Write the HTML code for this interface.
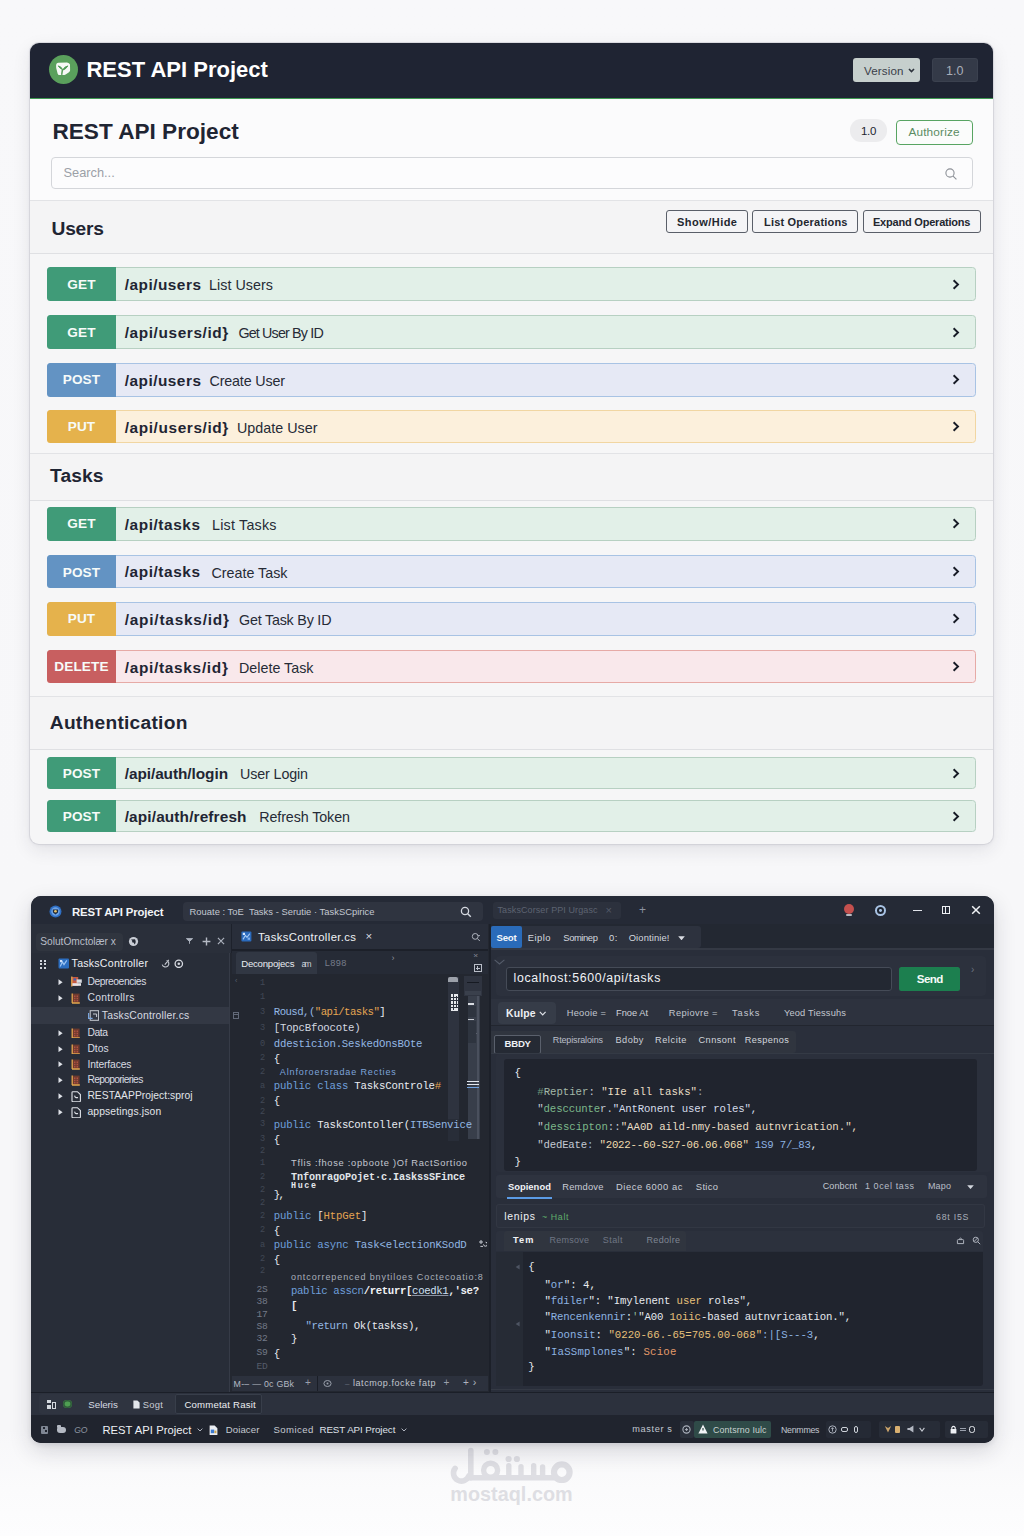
<!DOCTYPE html>
<html lang="en"><head><meta charset="utf-8"><title>REST API Project</title>
<style>
*{margin:0;padding:0;box-sizing:border-box}
html,body{width:1024px;height:1536px;overflow:hidden}
body{position:relative;background:linear-gradient(180deg,#f8f8fa 0%,#f7f7f9 58%,#f7f7f9 93%,#fbfbfc 97%,#fdfdfe 100%);font-family:"Liberation Sans",sans-serif}
div,span,svg{position:absolute}
span{white-space:pre}
.s{font-family:"Liberation Sans",sans-serif}
.m{font-family:"Liberation Mono",monospace}
b{font-weight:700}
</style></head><body>

<div style="left:30.4px;top:43.2px;width:963px;height:800.9px;border-radius:9px;background:#f6f6f7;box-shadow:0 0 0 1px rgba(200,200,208,.55),0 6px 18px rgba(40,40,60,.10),0 1px 4px rgba(40,40,60,.06);overflow:hidden">
<div style="left:-0.3999999999999986px;top:-0.20000000000000284px;width:964px;height:55.2px;background:#1f2433;"></div>
<div style="left:-0.3999999999999986px;top:54.7px;width:964px;height:1.3px;background:#3f9a52;"></div>
<div style="left:18.5px;top:11.599999999999994px;width:29.3px;height:29.3px;background:#5aa05c;border-radius:50%"></div>
<svg style="left:23.6px;top:16.799999999999997px" width="18" height="17" viewBox="54 60 18 17"><path d="M56.1 65.8 Q56.1 63 58.4 62.8 L67 62.4 Q69.4 62.6 70 64.6 L70.1 70.2 Q70 71.4 69 72.2 L65.6 74.6 Q65.2 74.9 64.4 74.9 L58.8 74.9 Q57.9 74.9 57.6 73.6 L56.2 68 Z" fill="#f7f9f6"/><path d="M58.2 65.9 Q61 66.2 62.5 69.4 Q60 68.9 58.2 65.9 Z M67.9 65.9 Q64.4 66.4 62.6 70.2 Q66 69.2 67.9 65.9 Z" fill="#4f9a56" stroke="#4f9a56" stroke-width=".9" stroke-linejoin="round"/><path d="M62.5 69.2 L61.7 74.9" fill="none" stroke="#5aa05c" stroke-width="1.5"/></svg>
<span class="s" style="left:56.1px;top:11.20px;line-height:31px;font-size:22px;color:#ffffff;font-weight:700;">REST API Project</span>
<div style="left:822.6px;top:15.299999999999997px;width:67px;height:23.5px;background:#c6cfcd;border-radius:3px"></div>
<span class="s" style="left:833.6px;top:19.40px;line-height:16px;font-size:11.6px;color:#3a4049;letter-spacing:0.151px;">Version</span>
<svg style="left:877.6px;top:25.299999999999997px" width="7" height="5" viewBox="0 0 7 5"><path d="M1 1 L3.5 3.6 L6 1" fill="none" stroke="#2d333c" stroke-width="1.6"/></svg>
<div style="left:901.6px;top:15.299999999999997px;width:46px;height:23.5px;background:#343a48;border-radius:3px;box-shadow:inset 0 0 0 1px rgba(255,255,255,.04)"></div>
<span class="s" style="left:915.6px;top:18.60px;line-height:18px;font-size:12.5px;color:#a9aeb8;">1.0</span>
<div style="left:-0.3999999999999986px;top:56.0px;width:964px;height:101.2px;background:#fbfbfc;"></div>
<span class="s" style="left:22.1px;top:72.60px;line-height:32px;font-size:22.6px;color:#1f2533;font-weight:700;">REST API Project</span>
<div style="left:819.6px;top:76.3px;width:37px;height:22.5px;background:#ececee;border-radius:11px"></div>
<span class="s" style="left:830.6px;top:79.60px;line-height:16px;font-size:11.5px;color:#22262e;letter-spacing:-.3px">1.0</span>
<div style="left:866.1px;top:76.8px;width:77px;height:25px;background:#fbfcfb;border:1.2px solid #58a462;border-radius:4px"></div>
<span class="s" style="left:878.0px;top:81.00px;line-height:17px;font-size:11.8px;color:#5b8c63;letter-spacing:0.169px;">Authorize</span>
<div style="left:21.1px;top:114.3px;width:922px;height:31.6px;background:#fcfcfd;border:1px solid #d4d6da;border-radius:4px"></div>
<span class="s" style="left:33.1px;top:120.90px;line-height:18px;font-size:12.8px;color:#9ba0a7;">Search...</span>
<svg style="left:913.6px;top:123.8px" width="14" height="14" viewBox="0 0 14 14"><circle cx="6" cy="6" r="4.1" fill="none" stroke="#8c9097" stroke-width="1.1"/><path d="M9.1 9.1 L12.4 12.4" stroke="#8c9097" stroke-width="1.1"/></svg>
<div style="left:-0.3999999999999986px;top:157.2px;width:964px;height:53.599999999999994px;background:#f4f4f5;"></div>
<div style="left:-0.3999999999999986px;top:156.7px;width:964px;height:1px;background:#e2e3e6;"></div>
<div style="left:-0.3999999999999986px;top:210.3px;width:964px;height:1px;background:#dfe0e3;"></div>
<span class="s" style="left:21.200000000000003px;top:172.20px;line-height:27px;font-size:19.2px;color:#1f2533;font-weight:700;letter-spacing:-0.243px;">Users</span>
<div style="left:-0.3999999999999986px;top:410.5px;width:964px;height:46.60000000000002px;background:#f4f4f5;"></div>
<div style="left:-0.3999999999999986px;top:410.0px;width:964px;height:1px;background:#e2e3e6;"></div>
<div style="left:-0.3999999999999986px;top:456.6px;width:964px;height:1px;background:#dfe0e3;"></div>
<span class="s" style="left:19.6px;top:419.30px;line-height:27px;font-size:19.2px;color:#1f2533;font-weight:700;letter-spacing:0.121px;">Tasks</span>
<div style="left:-0.3999999999999986px;top:653.0999999999999px;width:964px;height:53.0px;background:#f4f4f5;"></div>
<div style="left:-0.3999999999999986px;top:652.5999999999999px;width:964px;height:1px;background:#e2e3e6;"></div>
<div style="left:-0.3999999999999986px;top:705.5999999999999px;width:964px;height:1px;background:#dfe0e3;"></div>
<span class="s" style="left:19.4px;top:665.80px;line-height:27px;font-size:19.2px;color:#1f2533;font-weight:700;letter-spacing:0.254px;">Authentication</span>
<div style="left:635.6px;top:167.10000000000002px;width:82px;height:22.8px;background:#f4f4f6;border:1px solid #5a5f69;border-radius:3px"></div>
<span class="s" style="left:646.6px;top:171.90px;line-height:15px;font-size:11px;color:#23272f;font-weight:700;letter-spacing:0.472px;">Show/Hide</span>
<div style="left:722.1px;top:167.10000000000002px;width:106px;height:22.8px;background:#f4f4f6;border:1px solid #5a5f69;border-radius:3px"></div>
<span class="s" style="left:733.6px;top:171.90px;line-height:15px;font-size:11px;color:#23272f;font-weight:700;letter-spacing:0.201px;">List Operations</span>
<div style="left:832.6px;top:167.10000000000002px;width:118px;height:22.8px;background:#f4f4f6;border:1px solid #5a5f69;border-radius:3px"></div>
<span class="s" style="left:842.6px;top:171.90px;line-height:15px;font-size:11px;color:#23272f;font-weight:700;letter-spacing:-0.210px;">Expand Operations</span>
<div style="left:16.6px;top:224.0px;width:929.3px;height:34.2px;background:#e2f0e8;border:1px solid #b7d0c2;border-radius:3.5px"></div>
<div style="left:16.6px;top:224.0px;width:69px;height:34.2px;background:#409b78;border-radius:3.5px 0 0 3.5px"></div>
<span class="s" style="left:16.6px;top:224.0px;width:69px;text-align:center;line-height:35.800000000000004px;font-size:13.6px;font-weight:700;color:#f7fbf9;letter-spacing:.1px">GET</span>
<span class="s" style="left:94.30000000000001px;top:230.90px;line-height:22px;font-size:15.4px;color:#1f2533;font-weight:700;letter-spacing:0.489px;">/api/users</span>
<span class="s" style="left:178.6px;top:232.10px;line-height:20px;font-size:14.3px;color:#262b36;letter-spacing:0.048px;">List Users</span>
<svg style="left:922.1px;top:235.60000000000002px" width="8" height="11" viewBox="0 0 8 11"><path d="M1.6 1.3 L6 5.5 L1.6 9.7" fill="none" stroke="#171b26" stroke-width="1.9"/></svg>
<div style="left:16.6px;top:271.90000000000003px;width:929.3px;height:34.4px;background:#e2f0e8;border:1px solid #b7d0c2;border-radius:3.5px"></div>
<div style="left:16.6px;top:271.90000000000003px;width:69px;height:34.4px;background:#409b78;border-radius:3.5px 0 0 3.5px"></div>
<span class="s" style="left:16.6px;top:271.90000000000003px;width:69px;text-align:center;line-height:36.0px;font-size:13.6px;font-weight:700;color:#f7fbf9;letter-spacing:.1px">GET</span>
<span class="s" style="left:94.30000000000001px;top:278.90px;line-height:22px;font-size:15.4px;color:#1f2533;font-weight:700;letter-spacing:0.603px;">/api/users/id}</span>
<span class="s" style="left:208.0px;top:280.10px;line-height:20px;font-size:14.3px;color:#262b36;letter-spacing:-0.827px;">Get User By ID</span>
<svg style="left:922.1px;top:283.6px" width="8" height="11" viewBox="0 0 8 11"><path d="M1.6 1.3 L6 5.5 L1.6 9.7" fill="none" stroke="#171b26" stroke-width="1.9"/></svg>
<div style="left:16.6px;top:320.2px;width:929.3px;height:33.2px;background:#e6e9f5;border:1px solid #a8c3e4;border-radius:3.5px"></div>
<div style="left:16.6px;top:320.2px;width:69px;height:33.2px;background:#6393c3;border-radius:3.5px 0 0 3.5px"></div>
<span class="s" style="left:16.6px;top:320.2px;width:69px;text-align:center;line-height:34.800000000000004px;font-size:13.6px;font-weight:700;color:#f7fbf9;letter-spacing:.1px">POST</span>
<span class="s" style="left:94.30000000000001px;top:326.60px;line-height:22px;font-size:15.4px;color:#1f2533;font-weight:700;letter-spacing:0.489px;">/api/users</span>
<span class="s" style="left:179.1px;top:327.80px;line-height:20px;font-size:14.3px;color:#262b36;letter-spacing:-0.159px;">Create User</span>
<svg style="left:922.1px;top:331.3px" width="8" height="11" viewBox="0 0 8 11"><path d="M1.6 1.3 L6 5.5 L1.6 9.7" fill="none" stroke="#171b26" stroke-width="1.9"/></svg>
<div style="left:16.6px;top:367.1px;width:929.3px;height:33.1px;background:#fcf0dc;border:1px solid #f1d6a2;border-radius:3.5px"></div>
<div style="left:16.6px;top:367.1px;width:69px;height:33.1px;background:#e5b24c;border-radius:3.5px 0 0 3.5px"></div>
<span class="s" style="left:16.6px;top:367.1px;width:69px;text-align:center;line-height:34.7px;font-size:13.6px;font-weight:700;color:#f7fbf9;letter-spacing:.1px">PUT</span>
<span class="s" style="left:94.30000000000001px;top:373.45px;line-height:22px;font-size:15.4px;color:#1f2533;font-weight:700;letter-spacing:0.603px;">/api/users/id}</span>
<span class="s" style="left:206.6px;top:374.65px;line-height:20px;font-size:14.3px;color:#262b36;letter-spacing:0.022px;">Update User</span>
<svg style="left:922.1px;top:378.15000000000003px" width="8" height="11" viewBox="0 0 8 11"><path d="M1.6 1.3 L6 5.5 L1.6 9.7" fill="none" stroke="#171b26" stroke-width="1.9"/></svg>
<div style="left:16.6px;top:464.2px;width:929.3px;height:33.2px;background:#e2f0e8;border:1px solid #b7d0c2;border-radius:3.5px"></div>
<div style="left:16.6px;top:464.2px;width:69px;height:33.2px;background:#409b78;border-radius:3.5px 0 0 3.5px"></div>
<span class="s" style="left:16.6px;top:464.2px;width:69px;text-align:center;line-height:34.800000000000004px;font-size:13.6px;font-weight:700;color:#f7fbf9;letter-spacing:.1px">GET</span>
<span class="s" style="left:94.30000000000001px;top:470.60px;line-height:22px;font-size:15.4px;color:#1f2533;font-weight:700;letter-spacing:0.567px;">/api/tasks</span>
<span class="s" style="left:181.6px;top:471.80px;line-height:20px;font-size:14.3px;color:#262b36;letter-spacing:0.220px;">List Tasks</span>
<svg style="left:922.1px;top:475.3px" width="8" height="11" viewBox="0 0 8 11"><path d="M1.6 1.3 L6 5.5 L1.6 9.7" fill="none" stroke="#171b26" stroke-width="1.9"/></svg>
<div style="left:16.6px;top:511.7px;width:929.3px;height:33.6px;background:#e6e9f5;border:1px solid #a8c3e4;border-radius:3.5px"></div>
<div style="left:16.6px;top:511.7px;width:69px;height:33.6px;background:#6393c3;border-radius:3.5px 0 0 3.5px"></div>
<span class="s" style="left:16.6px;top:511.7px;width:69px;text-align:center;line-height:35.2px;font-size:13.6px;font-weight:700;color:#f7fbf9;letter-spacing:.1px">POST</span>
<span class="s" style="left:94.30000000000001px;top:518.30px;line-height:22px;font-size:15.4px;color:#1f2533;font-weight:700;letter-spacing:0.567px;">/api/tasks</span>
<span class="s" style="left:181.1px;top:519.50px;line-height:20px;font-size:14.3px;color:#262b36;letter-spacing:-0.004px;">Create Task</span>
<svg style="left:922.1px;top:522.9999999999999px" width="8" height="11" viewBox="0 0 8 11"><path d="M1.6 1.3 L6 5.5 L1.6 9.7" fill="none" stroke="#171b26" stroke-width="1.9"/></svg>
<div style="left:16.6px;top:559.1999999999999px;width:929.3px;height:33.2px;background:#e6e9f5;border:1px solid #a8c3e4;border-radius:3.5px"></div>
<div style="left:16.6px;top:559.1999999999999px;width:69px;height:33.2px;background:#e5b24c;border-radius:3.5px 0 0 3.5px"></div>
<span class="s" style="left:16.6px;top:559.1999999999999px;width:69px;text-align:center;line-height:34.800000000000004px;font-size:13.6px;font-weight:700;color:#f7fbf9;letter-spacing:.1px">PUT</span>
<span class="s" style="left:94.30000000000001px;top:565.60px;line-height:22px;font-size:15.4px;color:#1f2533;font-weight:700;letter-spacing:0.781px;">/api/tasks/id}</span>
<span class="s" style="left:208.6px;top:566.80px;line-height:20px;font-size:14.3px;color:#262b36;letter-spacing:-0.200px;">Get Task By ID</span>
<svg style="left:922.1px;top:570.3px" width="8" height="11" viewBox="0 0 8 11"><path d="M1.6 1.3 L6 5.5 L1.6 9.7" fill="none" stroke="#171b26" stroke-width="1.9"/></svg>
<div style="left:16.6px;top:607.0px;width:929.3px;height:33.3px;background:#f9e8eb;border:1px solid #e6aaa6;border-radius:3.5px"></div>
<div style="left:16.6px;top:607.0px;width:69px;height:33.3px;background:#c85f60;border-radius:3.5px 0 0 3.5px"></div>
<span class="s" style="left:16.6px;top:607.0px;width:69px;text-align:center;line-height:34.9px;font-size:13.6px;font-weight:700;color:#f7fbf9;letter-spacing:.1px">DELETE</span>
<span class="s" style="left:94.30000000000001px;top:613.45px;line-height:22px;font-size:15.4px;color:#1f2533;font-weight:700;letter-spacing:0.704px;">/api/tasks/id}</span>
<span class="s" style="left:208.6px;top:614.65px;line-height:20px;font-size:14.3px;color:#262b36;letter-spacing:0.005px;">Delete Task</span>
<svg style="left:922.1px;top:618.15px" width="8" height="11" viewBox="0 0 8 11"><path d="M1.6 1.3 L6 5.5 L1.6 9.7" fill="none" stroke="#171b26" stroke-width="1.9"/></svg>
<div style="left:16.6px;top:714.0px;width:929.3px;height:32.2px;background:#e2f0e8;border:1px solid #b7d0c2;border-radius:3.5px"></div>
<div style="left:16.6px;top:714.0px;width:69px;height:32.2px;background:#409b78;border-radius:3.5px 0 0 3.5px"></div>
<span class="s" style="left:16.6px;top:714.0px;width:69px;text-align:center;line-height:33.800000000000004px;font-size:13.6px;font-weight:700;color:#f7fbf9;letter-spacing:.1px">POST</span>
<span class="s" style="left:94.30000000000001px;top:719.90px;line-height:22px;font-size:15.4px;color:#1f2533;font-weight:700;letter-spacing:-0.069px;">/api/auth/login</span>
<span class="s" style="left:209.6px;top:721.10px;line-height:20px;font-size:14.3px;color:#262b36;letter-spacing:-0.117px;">User Login</span>
<svg style="left:922.1px;top:724.6px" width="8" height="11" viewBox="0 0 8 11"><path d="M1.6 1.3 L6 5.5 L1.6 9.7" fill="none" stroke="#171b26" stroke-width="1.9"/></svg>
<div style="left:16.6px;top:757.1999999999999px;width:929.3px;height:31.4px;background:#e2f0e8;border:1px solid #b7d0c2;border-radius:3.5px"></div>
<div style="left:16.6px;top:757.1999999999999px;width:69px;height:31.4px;background:#409b78;border-radius:3.5px 0 0 3.5px"></div>
<span class="s" style="left:16.6px;top:757.1999999999999px;width:69px;text-align:center;line-height:33.0px;font-size:13.6px;font-weight:700;color:#f7fbf9;letter-spacing:.1px">POST</span>
<span class="s" style="left:94.30000000000001px;top:762.70px;line-height:22px;font-size:15.4px;color:#1f2533;font-weight:700;letter-spacing:0.131px;">/api/auth/refresh</span>
<span class="s" style="left:228.9px;top:763.90px;line-height:20px;font-size:14.3px;color:#262b36;letter-spacing:-0.104px;">Refresh Token</span>
<svg style="left:922.1px;top:767.4px" width="8" height="11" viewBox="0 0 8 11"><path d="M1.6 1.3 L6 5.5 L1.6 9.7" fill="none" stroke="#171b26" stroke-width="1.9"/></svg>
</div>
<svg style="left:440px;top:1440px" width="150" height="50" viewBox="440 1440 150 50" fill="none" stroke="#dedee3" stroke-linecap="round" stroke-linejoin="round"><path d="M455.17 1468.34 A7.9 7.9 0 1 0 468.82 1475.90" stroke-width="5.6"/><path d="M470.8 1450.6 V1477.6" stroke-width="5.6"/><path d="M470.8 1477.8 H556" stroke-width="5.6"/><circle cx="490.6" cy="1470.2" r="7" stroke-width="5.4"/><path d="M508.8 1465.6 V1477 M521 1466.6 V1477 M533.7 1465.6 V1477 M542.6 1467 V1477" stroke-width="5.4"/><circle cx="561.8" cy="1472.2" r="7.8" stroke-width="6.2"/><g fill="#dedee3" stroke="none"><circle cx="486.9" cy="1452" r="3"/><circle cx="495.4" cy="1452" r="3"/><circle cx="508.6" cy="1459" r="3.1"/><circle cx="516.9" cy="1459" r="3.1"/></g></svg>
<span class="s" style="left:450.3px;top:1480.30px;line-height:28px;font-size:19.8px;color:#dedee3;font-weight:700;letter-spacing:0.037px;">mostaql.com</span>
<div style="left:30.5px;top:896.2px;width:963.2px;height:546.9px;border-radius:10px;background:#22272f;box-shadow:0 8px 22px rgba(30,30,50,.16),0 2px 5px rgba(30,30,50,.10);overflow:hidden">
<div style="left:-0.5px;top:-0.2px;width:964px;height:28.5px;background:#252a36;"></div>
<div style="left:-0.5px;top:28.3px;width:200.5px;height:468px;background:#2a2f3a;"></div>
<div style="left:200.0px;top:28.3px;width:1.2px;height:29px;background:#1d212b;"></div>
<div style="left:201.0px;top:28.3px;width:257px;height:468px;background:#232730;"></div>
<div style="left:458.0px;top:28.3px;width:2.2px;height:468px;background:#1c2029;"></div>
<div style="left:460.2px;top:28.3px;width:503px;height:468px;background:#2a2f3b;"></div>
<div style="left:-0.5px;top:496.3px;width:964px;height:50px;background:#2c313d;"></div>
<svg style="left:18.5px;top:8.8px" width="13" height="13" viewBox="0 0 13 13"><circle cx="6.5" cy="6.5" r="6" fill="#2f6fc4"/><circle cx="6.5" cy="6.5" r="4.2" fill="#6ea3e6"/><path d="M3.8 4.6 L9.2 4.6 L9 7.4 L6.5 9.6 L4 7.4 Z" fill="#1d2a3f"/><circle cx="6.5" cy="6.3" r="1.3" fill="#e9c46a"/></svg>
<span class="s" style="left:41.5px;top:7.40px;line-height:16px;font-size:11.4px;color:#f2f4f7;font-weight:700;letter-spacing:-0.164px;">REST API Project</span>
<div style="left:152.0px;top:5.8px;width:300.5px;height:19.5px;background:#2f3440;border-radius:4px"></div>
<span class="s" style="left:159.0px;top:9.20px;line-height:13px;font-size:9.4px;color:#c3c8d1;letter-spacing:0.025px;">Rouate : ToE  Tasks - Serutie · TaskSCpirice</span>
<svg style="left:429.5px;top:9.8px" width="12" height="12" viewBox="0 0 12 12"><circle cx="5" cy="5" r="3.6" fill="none" stroke="#d5d9e0" stroke-width="1.3"/><path d="M7.7 7.7 L10.8 10.8" stroke="#d5d9e0" stroke-width="1.4"/></svg>
<div style="left:462.0px;top:5.6px;width:128.5px;height:17.6px;background:#2c313d;border-radius:3px"></div>
<span class="s" style="left:467.0px;top:8.00px;line-height:13px;font-size:9px;color:#5c6371;letter-spacing:0.094px;">TasksCorser PPI Urgasc</span>
<span class="s" style="left:575.0px;top:6.70px;line-height:15px;font-size:11px;color:#535a68;">×</span>
<span class="s" style="left:608.5px;top:5.50px;line-height:17px;font-size:12px;color:#8b92a0;">+</span>
<div style="left:813.7px;top:8.1px;width:10px;height:10px;background:#c4504e;border-radius:50%"></div>
<div style="left:815.7px;top:17.4px;width:6px;height:2.2px;background:#d9dde3;border-radius:1px;opacity:.8"></div>
<div style="left:844.1px;top:8.4px;width:11.6px;height:11.6px;background:#1d2430;border-radius:50%;border:2.6px solid #a9c3e4"></div>
<div style="left:848.5px;top:12.8px;width:2.8px;height:2.8px;background:#a9c3e4;border-radius:50%"></div>
<div style="left:882.5px;top:13.6px;width:9px;height:1.4px;background:#e1e4ea;"></div>
<div style="left:911.0px;top:9.4px;width:8.8px;height:8.8px;border:1.6px solid #eceef2"></div>
<div style="left:914.7px;top:10.8px;width:1.3px;height:6px;background:#eceef2;"></div>
<svg style="left:940.5px;top:9.3px" width="10" height="10" viewBox="0 0 10 10"><path d="M1.2 1.2 L8.8 8.8 M8.8 1.2 L1.2 8.8" stroke="#f0f2f5" stroke-width="1.5"/></svg>
<div style="left:5.2px;top:36.5px;width:87.3px;height:18px;background:#30353f;border-radius:4px"></div>
<span class="s" style="left:9.8px;top:38.40px;line-height:14px;font-size:10.2px;color:#b9bec8;letter-spacing:-0.018px;">SolutOmctolær x</span>
<svg style="left:97.5px;top:39.8px" width="11" height="11" viewBox="0 0 11 11"><circle cx="5.5" cy="5.5" r="4.6" fill="#c9cdd5"/><path d="M3 3.4 Q5 4.6 4 6.4 Q6 6 6.6 8.4 Q8.6 6 7 3.2 Z" fill="#232833"/></svg>
<svg style="left:155.5px;top:41.8px" width="7" height="6" viewBox="0 0 7 6"><path d="M0.4 0.6 L6.6 0.6 L3.5 3.4 Z M3.5 2.6 L3.5 5.8" fill="#aeb4bf" stroke="#aeb4bf" stroke-width=".9"/></svg>
<svg style="left:171.0px;top:40.8px" width="9" height="9" viewBox="0 0 9 9"><path d="M4.5 .6 V8.4 M.6 4.5 H8.4" stroke="#b5bac4" stroke-width="1.4"/></svg>
<svg style="left:186.3px;top:41.1px" width="8" height="8" viewBox="0 0 8 8"><path d="M.9 .9 L7.1 7.1 M7.1 .9 L.9 7.1" stroke="#aab0bb" stroke-width="1.2"/></svg>
<div style="left:-0.5px;top:57.3px;width:198.5px;height:439px;background:#282d38;"></div>
<div style="left:198.0px;top:57.3px;width:1px;height:439px;background:#363b47;"></div>
<div style="left:9.7px;top:64.0px;width:2px;height:2px;background:#d3d7de;"></div>
<div style="left:9.7px;top:67.2px;width:2px;height:2px;background:#d3d7de;"></div>
<div style="left:9.7px;top:70.4px;width:2px;height:2px;background:#d3d7de;"></div>
<div style="left:13.1px;top:64.0px;width:2px;height:2px;background:#d3d7de;"></div>
<div style="left:13.1px;top:67.2px;width:2px;height:2px;background:#d3d7de;"></div>
<div style="left:13.1px;top:70.4px;width:2px;height:2px;background:#d3d7de;"></div>
<svg style="left:27.0px;top:62.1px" width="11.5" height="11" viewBox="0 0 11.5 11"><rect x=".5" y=".5" width="10.5" height="10" rx="1" fill="#2c6ec0"/><path d="M2.2 8.6 L4.4 4 L6 6.6 L8.8 2.4" stroke="#9cc4f2" stroke-width="1.2" fill="none"/><rect x="2" y="2" width="2.2" height="2.2" fill="#cfe2fa"/></svg>
<span class="s" style="left:41.1px;top:60.00px;line-height:15px;font-size:10.6px;color:#eef0f4;letter-spacing:0.240px;">TasksController</span>
<svg style="left:130.0px;top:62.6px" width="9" height="9" viewBox="0 0 9 9"><path d="M1.2 5.6 A3.4 3.4 0 1 0 5.6 1.4 M7.8 .8 L3.8 5.6" stroke="#c5c9d1" stroke-width="1.1" fill="none"/></svg>
<svg style="left:143.7px;top:62.4px" width="9.6" height="9.6" viewBox="0 0 9.6 9.6"><circle cx="4.8" cy="4.8" r="3.7" fill="none" stroke="#d6d9e0" stroke-width="1.3"/><circle cx="4.8" cy="4.8" r="1.3" fill="#d6d9e0"/></svg>
<div style="left:-0.5px;top:110.8px;width:198.5px;height:17px;background:#333844;"></div>
<svg style="left:27.9px;top:82.6px" width="5" height="6.4" viewBox="0 0 5 6.4"><path d="M.5 .3 L4.6 3.2 L.5 6.1 Z" fill="#dfe2e8"/></svg>
<svg style="left:40.0px;top:80.3px" width="11.5" height="11" viewBox="0 0 11.5 11"><rect x=".6" y="1" width="6.6" height="9" fill="#c65a42"/><path d="M.8 .6 V10.4" stroke="#e4a84f" stroke-width="1.3"/><rect x="5.6" y="3.4" width="5.2" height="3.4" fill="#d9dbe0"/><rect x="1.4" y="7.2" width="8.6" height="2.6" fill="#e6e7ea"/><rect x="2.6" y="2.4" width="2.4" height="2" fill="#3d63b8"/></svg>
<span class="s" style="left:56.9px;top:78.80px;line-height:14px;font-size:10.3px;color:#d9dce3;letter-spacing:-0.423px;">Depreoencies</span>
<svg style="left:27.9px;top:99.1px" width="5" height="6.4" viewBox="0 0 5 6.4"><path d="M.5 .3 L4.6 3.2 L.5 6.1 Z" fill="#dfe2e8"/></svg>
<svg style="left:40.5px;top:97.1px" width="9.5" height="10.5" viewBox="0 0 9.5 10.5"><rect x="1" y=".6" width="7.6" height="9.4" fill="#6e3a2e"/><path d="M1.2 .5 V10 M1 10 H8.8" stroke="#e3a64e" stroke-width="1.3"/><path d="M3.8 2.6 V8.4 M6.2 2.6 V8.4" stroke="#c45a48" stroke-width="1.1" stroke-dasharray="1.4 .8"/></svg>
<span class="s" style="left:56.9px;top:95.30px;line-height:14px;font-size:10.3px;color:#d9dce3;letter-spacing:0.314px;">Controllrs</span>
<svg style="left:27.9px;top:133.5px" width="5" height="6.4" viewBox="0 0 5 6.4"><path d="M.5 .3 L4.6 3.2 L.5 6.1 Z" fill="#dfe2e8"/></svg>
<svg style="left:40.5px;top:131.5px" width="9.5" height="10.5" viewBox="0 0 9.5 10.5"><rect x="1" y=".6" width="7.6" height="9.4" fill="#6e3a2e"/><path d="M1.2 .5 V10 M1 10 H8.8" stroke="#e3a64e" stroke-width="1.3"/><path d="M3.8 2.6 V8.4 M6.2 2.6 V8.4" stroke="#c45a48" stroke-width="1.1" stroke-dasharray="1.4 .8"/></svg>
<span class="s" style="left:56.9px;top:129.70px;line-height:14px;font-size:10.3px;color:#d9dce3;letter-spacing:-0.386px;">Data</span>
<svg style="left:27.9px;top:149.7px" width="5" height="6.4" viewBox="0 0 5 6.4"><path d="M.5 .3 L4.6 3.2 L.5 6.1 Z" fill="#dfe2e8"/></svg>
<svg style="left:40.5px;top:147.7px" width="9.5" height="10.5" viewBox="0 0 9.5 10.5"><rect x="1" y=".6" width="7.6" height="9.4" fill="#6e3a2e"/><path d="M1.2 .5 V10 M1 10 H8.8" stroke="#e3a64e" stroke-width="1.3"/><path d="M3.8 2.6 V8.4 M6.2 2.6 V8.4" stroke="#c45a48" stroke-width="1.1" stroke-dasharray="1.4 .8"/></svg>
<span class="s" style="left:56.9px;top:145.90px;line-height:14px;font-size:10.3px;color:#d9dce3;letter-spacing:0.007px;">Dtos</span>
<svg style="left:27.9px;top:165.3px" width="5" height="6.4" viewBox="0 0 5 6.4"><path d="M.5 .3 L4.6 3.2 L.5 6.1 Z" fill="#dfe2e8"/></svg>
<svg style="left:40.5px;top:163.3px" width="9.5" height="10.5" viewBox="0 0 9.5 10.5"><rect x="1" y=".6" width="7.6" height="9.4" fill="#6e3a2e"/><path d="M1.2 .5 V10 M1 10 H8.8" stroke="#e3a64e" stroke-width="1.3"/><path d="M3.8 2.6 V8.4 M6.2 2.6 V8.4" stroke="#c45a48" stroke-width="1.1" stroke-dasharray="1.4 .8"/></svg>
<span class="s" style="left:56.9px;top:161.50px;line-height:14px;font-size:10.3px;color:#d9dce3;letter-spacing:-0.125px;">Interfaces</span>
<svg style="left:27.9px;top:181.1px" width="5" height="6.4" viewBox="0 0 5 6.4"><path d="M.5 .3 L4.6 3.2 L.5 6.1 Z" fill="#dfe2e8"/></svg>
<svg style="left:40.5px;top:179.1px" width="9.5" height="10.5" viewBox="0 0 9.5 10.5"><rect x="1" y=".6" width="7.6" height="9.4" fill="#6e3a2e"/><path d="M1.2 .5 V10 M1 10 H8.8" stroke="#e3a64e" stroke-width="1.3"/><path d="M3.8 2.6 V8.4 M6.2 2.6 V8.4" stroke="#c45a48" stroke-width="1.1" stroke-dasharray="1.4 .8"/></svg>
<span class="s" style="left:56.9px;top:177.30px;line-height:14px;font-size:10.3px;color:#d9dce3;letter-spacing:-0.685px;">Repoporieries</span>
<svg style="left:27.9px;top:197.1px" width="5" height="6.4" viewBox="0 0 5 6.4"><path d="M.5 .3 L4.6 3.2 L.5 6.1 Z" fill="#dfe2e8"/></svg>
<svg style="left:40.1px;top:194.7px" width="10.5" height="11.5" viewBox="0 0 10.5 11.5"><path d="M1 1.4 Q1 .7 1.8 .7 H6.4 L9.4 3.6 V9.8 Q9.4 10.7 8.6 10.7 H1.8 Q1 10.7 1 9.8 Z" fill="none" stroke="#e0e3e9" stroke-width="1.1"/><path d="M3.6 4.6 Q4.2 7.4 7 6.4" fill="none" stroke="#e0e3e9" stroke-width="1.1"/></svg>
<span class="s" style="left:56.9px;top:193.30px;line-height:14px;font-size:10.3px;color:#e2e5ea;letter-spacing:0.028px;">RESTAAPProject:sproj</span>
<svg style="left:27.9px;top:212.9px" width="5" height="6.4" viewBox="0 0 5 6.4"><path d="M.5 .3 L4.6 3.2 L.5 6.1 Z" fill="#dfe2e8"/></svg>
<svg style="left:40.1px;top:210.5px" width="10.5" height="11.5" viewBox="0 0 10.5 11.5"><path d="M1 1.4 Q1 .7 1.8 .7 H6.4 L9.4 3.6 V9.8 Q9.4 10.7 8.6 10.7 H1.8 Q1 10.7 1 9.8 Z" fill="none" stroke="#e0e3e9" stroke-width="1.1"/><path d="M3.6 4.6 Q4.2 7.4 7 6.4" fill="none" stroke="#e0e3e9" stroke-width="1.1"/></svg>
<span class="s" style="left:56.9px;top:209.10px;line-height:14px;font-size:10.3px;color:#e2e5ea;letter-spacing:0.159px;">appsetings.json</span>
<svg style="left:57.1px;top:113.8px" width="11.5" height="11" viewBox="0 0 11.5 11"><rect x="2.2" y=".7" width="8.4" height="9.6" fill="none" stroke="#c7cbd3" stroke-width="1"/><path d="M.6 3 V8.4 H4.6" fill="none" stroke="#7da9e2" stroke-width="1.1"/><path d="M5 4 H8.6 V7" fill="none" stroke="#c7cbd3" stroke-width="1"/></svg>
<span class="s" style="left:71.3px;top:111.70px;line-height:15px;font-size:10.4px;color:#d7dae1;letter-spacing:0.183px;">TasksController.cs</span>
<div style="left:199.0px;top:57.3px;width:2.2px;height:439px;background:#232730;"></div>
<div style="left:201.2px;top:28.3px;width:256.8px;height:24.3px;background:#292e3a;"></div>
<div style="left:201.2px;top:52.6px;width:256.8px;height:2.6px;background:#1c2029;"></div>
<svg style="left:210.8px;top:35.0px" width="10.8" height="10.8" viewBox="0 0 10.8 10.8"><rect x=".4" y=".4" width="10" height="10" rx="1" fill="#2b6bbd"/><path d="M2 8.4 L4.4 4.4 L6 6.4 L8.8 2.6" stroke="#a5c9f4" stroke-width="1.1" fill="none"/><rect x="1.8" y="1.8" width="2.2" height="2.2" fill="#d5e5fb"/><rect x="6.6" y="6.6" width="2.4" height="2.2" fill="#7fb0ee"/></svg>
<span class="s" style="left:227.5px;top:32.40px;line-height:16px;font-size:11.3px;color:#f0f2f5;letter-spacing:0.371px;">TasksController.cs</span>
<span class="s" style="left:335.0px;top:32.00px;line-height:16px;font-size:11.5px;color:#d9dce2;">×</span>
<svg style="left:440.5px;top:35.8px" width="10" height="10" viewBox="0 0 10 10"><circle cx="4.2" cy="4.4" r="2.9" fill="none" stroke="#aeb3bd" stroke-width="1"/><path d="M6.4 6.6 L8.8 9" stroke="#aeb3bd" stroke-width="1"/><path d="M7 3.6 L9 3.6" stroke="#aeb3bd" stroke-width=".9"/></svg>
<div style="left:201.2px;top:55.2px;width:256.8px;height:22.8px;background:#262b36;"></div>
<div style="left:205.5px;top:55.4px;width:81.3px;height:22.4px;background:#313743;border-radius:3px 3px 0 0"></div>
<span class="s" style="left:210.7px;top:60.70px;line-height:13px;font-size:9.6px;color:#e9ecf0;letter-spacing:-0.220px;">Deconpojecs</span>
<span class="s" style="left:271.0px;top:61.60px;line-height:12px;font-size:8.8px;color:#c9cdd5;letter-spacing:-2.025px;">am</span>
<span class="s" style="left:294.2px;top:60.60px;line-height:13px;font-size:9.2px;color:#767d8b;letter-spacing:0.378px;">L898</span>
<span class="s" style="left:361.0px;top:56.30px;line-height:13px;font-size:9px;color:#8a909c;">›</span>
<span class="s" style="left:443.0px;top:54.30px;line-height:11px;font-size:8px;color:#8a909c;letter-spacing:-1px">›‹</span>
<div style="left:443.3px;top:67.8px;width:8.2px;height:8.2px;border:1px solid #b9bec8"></div>
<div style="left:446.9px;top:69.8px;width:1px;height:4.4px;background:#b9bec8;"></div>
<div style="left:445.3px;top:71.4px;width:4.2px;height:1px;background:#b9bec8;"></div>
<div style="left:417.0px;top:80.8px;width:11.2px;height:142px;background:#2e333f;"></div>
<div style="left:417.0px;top:222.8px;width:11.2px;height:22px;background:#282d38;"></div>
<div style="left:417.3px;top:80.8px;width:10.6px;height:4.6px;background:#9ca1aa;border-radius:2px 2px 0 0"></div>
<div style="left:420.1px;top:98.2px;width:7.8px;height:2.2px;background:#e6e8ec;"></div>
<div style="left:420.1px;top:101.8px;width:7.8px;height:2px;background:#e6e8ec;"></div>
<div style="left:420.1px;top:105.2px;width:7.8px;height:2.2px;background:#e6e8ec;"></div>
<div style="left:420.1px;top:108.8px;width:7.8px;height:2px;background:#e6e8ec;"></div>
<div style="left:420.1px;top:112.0px;width:7.8px;height:2.4px;background:#e6e8ec;"></div>
<div style="left:422.1px;top:98.2px;width:1.2px;height:16px;background:#2e333f;"></div>
<div style="left:425.1px;top:99.8px;width:1px;height:12px;background:#2e333f;"></div>
<div style="left:433.0px;top:79.6px;width:18.5px;height:19.8px;background:#2f3440;"></div>
<div style="left:436.0px;top:85.4px;width:12.5px;height:1.3px;background:#161a22;"></div>
<div style="left:434.5px;top:94.4px;width:15.5px;height:4.4px;background:#3a404c;"></div>
<div style="left:437.1px;top:99.4px;width:12.3px;height:143.6px;background:#383e4a;"></div>
<div style="left:446.5px;top:99.4px;width:1.6px;height:143.6px;background:#4a505d;"></div>
<div style="left:437.5px;top:107.2px;width:6.4px;height:1.6px;background:#d9dce2;"></div>
<div style="left:437.5px;top:122.4px;width:6.4px;height:1.5px;background:#c9cdd4;"></div>
<div style="left:438.1px;top:136.8px;width:8px;height:1px;background:#5a606c;"></div>
<div style="left:437.5px;top:110.2px;width:8px;height:11px;background:#2e343f;"></div>
<div style="left:437.5px;top:125.2px;width:8px;height:22px;background:#2e343f;"></div>
<div style="left:436.7px;top:184.8px;width:12.3px;height:1.4px;background:#e3e8f0;"></div>
<div style="left:436.7px;top:187.8px;width:12.3px;height:1.4px;background:#e3e8f0;"></div>
<div style="left:436.7px;top:190.8px;width:12.3px;height:1.5px;background:#6fa2e2;"></div>
<div style="left:202.5px;top:115.6px;width:6.4px;height:7px;border:1px solid #626978"></div>
<div style="left:203.5px;top:118.2px;width:4.4px;height:1px;background:#626978;"></div>
<span class="s" style="left:204.5px;top:79.80px;line-height:10px;font-size:7px;color:#596070;">‹</span>
<span class="m" style="left:243.3px;top:109.00px;line-height:15px;font-size:10.7px;letter-spacing:-0.556px;"><span style="position:static;color:#93b7e4">Rousd,(</span><span style="position:static;color:#e3a552">"api/tasks"</span><span style="position:static;color:#e8ebf0">]</span></span>
<span class="m" style="left:243.3px;top:124.90px;line-height:15px;font-size:10.7px;letter-spacing:-0.223px;"><span style="position:static;color:#d3d8e0">[TopcBfoocote)</span></span>
<span class="m" style="left:243.3px;top:141.20px;line-height:15px;font-size:10.7px;letter-spacing:-0.226px;"><span style="position:static;color:#93b7e4">ddesticion.SeskedOnsBOte</span></span>
<span class="m" style="left:243.3px;top:155.70px;line-height:15px;font-size:10.7px;letter-spacing:-0.221px;"><span style="position:static;color:#e8ebf0">{</span></span>
<span class="s" style="left:249.3px;top:169.40px;line-height:13px;font-size:9px;color:#7ea4da;letter-spacing:0.884px;">Alnforoersradae Recties</span>
<span class="m" style="left:243.3px;top:182.90px;line-height:15px;font-size:10.7px;letter-spacing:-0.222px;"><span style="position:static;color:#6f9fdb">public class </span><span style="position:static;color:#e8ebf0">TasksControle</span><span style="position:static;color:#e3a552">#</span></span>
<span class="m" style="left:243.3px;top:197.90px;line-height:15px;font-size:10.7px;letter-spacing:-0.221px;"><span style="position:static;color:#e8ebf0">{</span></span>
<span class="m" style="left:243.3px;top:221.60px;line-height:15px;font-size:10.7px;letter-spacing:-0.225px;"><span style="position:static;color:#6f9fdb">public </span><span style="position:static;color:#e8ebf0">TasksContoller(</span><span style="position:static;color:#93b7e4">ITBSenvice</span></span>
<span class="m" style="left:243.3px;top:236.60px;line-height:15px;font-size:10.7px;letter-spacing:-0.221px;"><span style="position:static;color:#e8ebf0">{</span></span>
<span class="s" style="left:260.5px;top:261.30px;line-height:13px;font-size:9.3px;color:#c4c8d0;letter-spacing:0.711px;">Tflis :fhose :opboote )Of RactSortioo</span>
<span class="m" style="left:260.5px;top:274.40px;line-height:14px;font-size:10.2px;letter-spacing:-0.111px;font-weight:700;"><span style="position:static;color:#e1e5ea">TnfonragoPojet·c.IaskssSFince</span></span>
<span class="m" style="left:260.5px;top:284.00px;line-height:12px;font-size:8.4px;letter-spacing:1.612px;font-weight:700;"><span style="position:static;color:#e3e6eb">Huce</span></span>
<span class="m" style="left:243.3px;top:291.90px;line-height:15px;font-size:10.7px;letter-spacing:-1.642px;"><span style="position:static;color:#e8ebf0">},</span></span>
<span class="m" style="left:243.3px;top:313.30px;line-height:15px;font-size:10.7px;letter-spacing:-0.194px;"><span style="position:static;color:#6f9fdb">public </span><span style="position:static;color:#e8ebf0">[</span><span style="position:static;color:#e3a552">HtpGet</span><span style="position:static;color:#e8ebf0">]</span></span>
<span class="m" style="left:243.3px;top:327.50px;line-height:15px;font-size:10.7px;letter-spacing:-0.221px;"><span style="position:static;color:#e8ebf0">{</span></span>
<span class="m" style="left:243.3px;top:342.00px;line-height:15px;font-size:10.7px;letter-spacing:-0.195px;"><span style="position:static;color:#6f9fdb">public async </span><span style="position:static;color:#93b7e4">Task&lt;electionKSodD</span></span>
<svg style="left:447.5px;top:343.3px" width="9" height="9" viewBox="0 0 9 9"><path d="M1 3 H5 M3 1 V5 M5.5 5.4 A2 2 0 1 0 7.6 3.2 M2.4 7.4 H5" stroke="#c7cbd3" stroke-width="1" fill="none"/></svg>
<span class="m" style="left:243.3px;top:356.50px;line-height:15px;font-size:10.7px;letter-spacing:-0.221px;"><span style="position:static;color:#e8ebf0">{</span></span>
<span class="s" style="left:260.5px;top:375.30px;line-height:13px;font-size:9px;color:#a9afba;letter-spacing:0.911px;">ontcorrepenced bnytiloes Coctecoatio:8</span>
<span class="m" style="left:260.5px;top:388.20px;line-height:15px;font-size:10.7px;letter-spacing:-.36px"><span style="position:static;color:#6f9fdb">pablic asscn</span><b style="color:#f1f3f6">/returr[</b><span style="position:static;color:#cfe0f2;text-decoration:underline;text-decoration-color:#8a93a3">coedk1</span><b style="color:#eef0f4">,'se?</b></span>
<span class="m" style="left:260.5px;top:403.30px;line-height:15px;font-size:10.7px;letter-spacing:-0.921px;font-weight:700;"><span style="position:static;color:#e8ebf0">[</span></span>
<span class="m" style="left:274.9px;top:423.20px;line-height:15px;font-size:10.7px;letter-spacing:-0.378px;"><span style="position:static;color:#93b7e4">"return </span><span style="position:static;color:#e8ebf0">Ok(taskss),</span></span>
<span class="m" style="left:260.5px;top:435.60px;line-height:15px;font-size:10.7px;letter-spacing:-0.021px;"><span style="position:static;color:#e8ebf0">}</span></span>
<span class="m" style="left:243.3px;top:450.80px;line-height:15px;font-size:10.7px;letter-spacing:-0.221px;"><span style="position:static;color:#e8ebf0">{</span></span>
<span class="m" style="left:229.5px;top:80.50px;line-height:12px;font-size:8.6px;color:#414855;">1</span>
<span class="m" style="left:229.5px;top:94.80px;line-height:12px;font-size:8.6px;color:#414855;">1</span>
<span class="m" style="left:229.5px;top:109.50px;line-height:12px;font-size:8.6px;color:#414855;">3</span>
<span class="m" style="left:229.5px;top:125.40px;line-height:12px;font-size:8.6px;color:#414855;">3</span>
<span class="m" style="left:229.5px;top:141.70px;line-height:12px;font-size:8.6px;color:#414855;">0</span>
<span class="m" style="left:229.5px;top:156.20px;line-height:12px;font-size:8.6px;color:#414855;">2</span>
<span class="m" style="left:229.5px;top:169.90px;line-height:12px;font-size:8.6px;color:#414855;">2</span>
<span class="m" style="left:229.5px;top:183.40px;line-height:12px;font-size:8.6px;color:#414855;">a</span>
<span class="m" style="left:229.5px;top:198.40px;line-height:12px;font-size:8.6px;color:#414855;">2</span>
<span class="m" style="left:229.5px;top:210.30px;line-height:12px;font-size:8.6px;color:#414855;">2</span>
<span class="m" style="left:229.5px;top:222.10px;line-height:12px;font-size:8.6px;color:#414855;">3</span>
<span class="m" style="left:229.5px;top:237.10px;line-height:12px;font-size:8.6px;color:#414855;">3</span>
<span class="m" style="left:229.5px;top:248.80px;line-height:12px;font-size:8.6px;color:#414855;">2</span>
<span class="m" style="left:229.5px;top:260.80px;line-height:12px;font-size:8.6px;color:#414855;">1</span>
<span class="m" style="left:229.5px;top:274.80px;line-height:12px;font-size:8.6px;color:#414855;">2</span>
<span class="m" style="left:229.5px;top:287.80px;line-height:12px;font-size:8.6px;color:#414855;">2</span>
<span class="m" style="left:229.5px;top:300.80px;line-height:12px;font-size:8.6px;color:#414855;">2</span>
<span class="m" style="left:229.5px;top:313.80px;line-height:12px;font-size:8.6px;color:#414855;">2</span>
<span class="m" style="left:229.5px;top:328.00px;line-height:12px;font-size:8.6px;color:#414855;">2</span>
<span class="m" style="left:229.5px;top:342.50px;line-height:12px;font-size:8.6px;color:#414855;">a</span>
<span class="m" style="left:229.5px;top:357.00px;line-height:12px;font-size:8.6px;color:#414855;">2</span>
<span class="m" style="left:229.5px;top:369.30px;line-height:12px;font-size:8.6px;color:#414855;">2</span>
<span class="m" style="left:226.1px;top:386.80px;line-height:13px;font-size:9.6px;color:#737a88;letter-spacing:-0.422px;">2S</span>
<span class="m" style="left:226.1px;top:398.80px;line-height:13px;font-size:9.6px;color:#737a88;letter-spacing:-0.422px;">38</span>
<span class="m" style="left:226.1px;top:411.80px;line-height:13px;font-size:9.6px;color:#737a88;letter-spacing:-0.422px;">17</span>
<span class="m" style="left:226.1px;top:424.30px;line-height:13px;font-size:9.6px;color:#737a88;letter-spacing:-0.422px;">S8</span>
<span class="m" style="left:226.1px;top:436.30px;line-height:13px;font-size:9.6px;color:#737a88;letter-spacing:-0.422px;">32</span>
<span class="m" style="left:226.1px;top:450.30px;line-height:13px;font-size:9.6px;color:#737a88;letter-spacing:-0.422px;">S9</span>
<span class="m" style="left:226.1px;top:464.00px;line-height:13px;font-size:9.6px;color:#555c6a;letter-spacing:-0.422px;">ED</span>
<div style="left:201.2px;top:479.8px;width:256.8px;height:15px;background:#2c313d;"></div>
<div style="left:286.5px;top:479.8px;width:1px;height:15px;background:#1a1e27;"></div>
<span class="s" style="left:203.1px;top:481.40px;line-height:12px;font-size:8.8px;color:#b4b9c3;letter-spacing:0.246px;">M-– — 0c GBk</span>
<span class="s" style="left:274.5px;top:480.00px;line-height:14px;font-size:10px;color:#9aa0ac;">+</span>
<svg style="left:292.0px;top:483.0px" width="9" height="9" viewBox="0 0 9 9"><ellipse cx="4.5" cy="4.5" rx="3.6" ry="3" fill="none" stroke="#9aa0ac" stroke-width="1"/><circle cx="4.5" cy="4.5" r="1" fill="#9aa0ac"/></svg>
<span class="s" style="left:314.5px;top:481.50px;line-height:11px;font-size:8px;color:#6c7380;">–</span>
<span class="s" style="left:322.5px;top:481.00px;line-height:13px;font-size:9px;color:#c2c6cf;letter-spacing:0.557px;">latcmop.focke fatp</span>
<span class="s" style="left:413.0px;top:480.00px;line-height:14px;font-size:10px;color:#9aa0ac;">+</span>
<span class="s" style="left:432.5px;top:480.00px;line-height:14px;font-size:10px;color:#aeb3bd;">+</span>
<span class="s" style="left:442.3px;top:479.30px;line-height:15px;font-size:11px;color:#aeb3bd;">›</span>
<div style="left:460.2px;top:28.3px;width:503px;height:24px;background:#232832;"></div>
<div style="left:460.2px;top:29.4px;width:210.5px;height:22.6px;background:#2d323e;border-radius:0 3px 3px 0"></div>
<div style="left:460.4px;top:29.8px;width:31.2px;height:22px;background:#2a6bb9;border-radius:2px"></div>
<span class="s" style="left:466.1px;top:34.60px;line-height:13px;font-size:9.6px;color:#f4f7fb;font-weight:700;letter-spacing:-0.268px;">Seot</span>
<span class="s" style="left:497.2px;top:34.60px;line-height:13px;font-size:9.4px;color:#d4d8df;letter-spacing:0.474px;">Eiplo</span>
<span class="s" style="left:532.8px;top:34.60px;line-height:13px;font-size:9.4px;color:#d4d8df;letter-spacing:-0.400px;">Sominep</span>
<span class="s" style="left:578.4px;top:34.50px;line-height:13px;font-size:9.4px;color:#d4d8df;letter-spacing:0.761px;">0:</span>
<span class="s" style="left:598.2px;top:34.60px;line-height:13px;font-size:9.4px;color:#d4d8df;letter-spacing:0.121px;">Oiontinie!</span>
<svg style="left:647.5px;top:39.4px" width="7" height="4.6" viewBox="0 0 7 4.6"><path d="M.2 .3 H6.8 L3.5 4.3 Z" fill="#d9dce2"/></svg>
<div style="left:460.2px;top:52.2px;width:503px;height:1.2px;background:#343944;"></div>
<div style="left:460.2px;top:53.4px;width:503px;height:443px;background:#292e3a;"></div>
<div style="left:465.5px;top:60.3px;width:490px;height:40px;background:#2c313d;border-radius:4px"></div>
<svg style="left:463.0px;top:62.4px" width="11" height="6" viewBox="0 0 11 6"><path d="M.6 .8 L5.5 5 L10.4 .8" fill="none" stroke="#555c6a" stroke-width="1.1"/></svg>
<div style="left:475.5px;top:70.4px;width:385.8px;height:24.8px;background:#232832;border:1px solid #454b57;border-radius:3px"></div>
<span class="s" style="left:483.0px;top:74.10px;line-height:17px;font-size:12.3px;color:#f1f3f6;letter-spacing:0.675px;">localhost:5600/api/tasks</span>
<div style="left:868.8px;top:70.8px;width:60.6px;height:24px;background:#1c7f4f;border-radius:2.5px"></div>
<span class="s" style="left:886.3px;top:74.70px;line-height:16px;font-size:11.6px;color:#f5faf7;font-weight:700;letter-spacing:-0.587px;">Send</span>
<span class="s" style="left:940.5px;top:67.00px;line-height:14px;font-size:10px;color:#6b7280;">›</span>
<div style="left:460.2px;top:103.3px;width:503px;height:26px;background:#2d323e;"></div>
<div style="left:460.2px;top:129.3px;width:503px;height:1px;background:#22262f;"></div>
<div style="left:460.2px;top:130.3px;width:503px;height:26.5px;background:#2a2f3b;"></div>
<div style="left:467.7px;top:105.8px;width:57.5px;height:22.5px;background:#363c48;border-radius:4px"></div>
<span class="s" style="left:475.5px;top:109.50px;line-height:15px;font-size:10.4px;color:#eef0f4;font-weight:700;letter-spacing:0.178px;">Kulpe</span>
<svg style="left:508.9px;top:114.8px" width="7.4" height="5" viewBox="0 0 7.4 5"><path d="M.8 .8 L3.7 3.8 L6.6 .8" fill="none" stroke="#dfe2e8" stroke-width="1.2"/></svg>
<span class="s" style="left:536.2px;top:110.70px;line-height:13px;font-size:9.3px;color:#c2c7d0;letter-spacing:0.259px;">Heooie =</span>
<span class="s" style="left:585.5px;top:110.70px;line-height:13px;font-size:9.3px;color:#cfd3da;letter-spacing:-0.009px;">Fnoe At</span>
<span class="s" style="left:638.3px;top:110.70px;line-height:13px;font-size:9.3px;color:#c2c7d0;letter-spacing:0.385px;">Repiovre =</span>
<span class="s" style="left:701.5px;top:110.70px;line-height:13px;font-size:9.3px;color:#c2c7d0;letter-spacing:0.932px;">Tasks</span>
<span class="s" style="left:753.4px;top:110.70px;line-height:13px;font-size:9.3px;color:#c2c7d0;letter-spacing:0.162px;">Yeod Tiessuhs</span>
<div style="left:460.2px;top:134.8px;width:305.5px;height:22.4px;background:#30353f;border-radius:0 3px 3px 0"></div>
<div style="left:463.7px;top:138.8px;width:46.8px;height:18.6px;background:#252a34;border:1px solid #5a606c;border-radius:2px"></div>
<span class="s" style="left:474.0px;top:140.50px;line-height:13px;font-size:9.6px;color:#eef0f4;font-weight:700;letter-spacing:-0.234px;">BBDY</span>
<span class="s" style="left:522.3px;top:138.30px;line-height:13px;font-size:9px;color:#b9bec8;letter-spacing:-0.152px;">Rtepisraloins</span>
<span class="s" style="left:585.0px;top:138.30px;line-height:13px;font-size:9.2px;color:#c9cdd5;letter-spacing:0.478px;">Bdoby</span>
<span class="s" style="left:624.5px;top:138.30px;line-height:13px;font-size:9.2px;color:#d2d6dd;letter-spacing:0.563px;">Relcite</span>
<span class="s" style="left:668.0px;top:138.30px;line-height:13px;font-size:9.2px;color:#d2d6dd;letter-spacing:0.456px;">Cnnsont</span>
<span class="s" style="left:714.2px;top:138.30px;line-height:13px;font-size:9.2px;color:#d2d6dd;letter-spacing:0.410px;">Respenos</span>
<div style="left:460.2px;top:156.8px;width:503px;height:1px;background:#343a45;"></div>
<div style="left:465.5px;top:157.8px;width:495px;height:118px;background:#2b303c;border-radius:3px"></div>
<div style="left:473.8px;top:163.0px;width:472.9px;height:111.4px;background:#20242e;border-radius:3px"></div>
<span class="m" style="left:484.0px;top:169.70px;line-height:15px;font-size:10.7px;letter-spacing:0.079px;"><span style="position:static;color:#e6e9ee">{</span></span>
<span class="m" style="left:506.8px;top:189.30px;line-height:15px;font-size:10.7px;letter-spacing:-0.030px;"><span style="position:static;color:#6f9a7c">#</span><span style="position:static;color:#a3b8a8">Reptier</span><span style="position:static;color:#c3c9d3">: </span><span style="position:static;color:#eadfc6">"IIe all tasks"</span><span style="position:static;color:#9aa0ac">:</span></span>
<span class="m" style="left:506.8px;top:205.90px;line-height:15px;font-size:10.7px;letter-spacing:-0.133px;"><span style="position:static;color:#c3c9d3">"</span><span style="position:static;color:#7db88b">desccunte</span><span style="position:static;color:#c3c9d3">r.</span><span style="position:static;color:#d5dcea">"AntRonent user roles",</span></span>
<span class="m" style="left:506.8px;top:224.30px;line-height:15px;font-size:10.7px;letter-spacing:-0.001px;"><span style="position:static;color:#c3c9d3">"</span><span style="position:static;color:#7db88b">desscipton</span><span style="position:static;color:#c3c9d3">::</span><span style="position:static;color:#eadfc6">"AA0D aild-nmy-based autnvrication.",</span></span>
<span class="m" style="left:506.8px;top:241.60px;line-height:15px;font-size:10.7px;letter-spacing:-0.199px;"><span style="position:static;color:#c3c9d3">"dedEate</span><span style="position:static;color:#8db3e2">: </span><span style="position:static;color:#f0dcae">"2022--60-S27-06.06.068"</span><span style="position:static;color:#8db3e2"> 1S9 7/_83</span><span style="position:static;color:#e6e9ee">,</span></span>
<span class="m" style="left:484.0px;top:258.90px;line-height:15px;font-size:10.7px;letter-spacing:0.079px;"><span style="position:static;color:#e6e9ee">}</span></span>
<div style="left:465.5px;top:278.6px;width:491.4px;height:23.6px;background:#2e333f;border-radius:3px"></div>
<span class="s" style="left:477.4px;top:283.90px;line-height:13px;font-size:9.4px;color:#f0f2f5;font-weight:700;letter-spacing:0.040px;">Sopienod</span>
<div style="left:476.3px;top:300.8px;width:45.6px;height:1.6px;background:#5b9be6;"></div>
<span class="s" style="left:531.7px;top:283.90px;line-height:13px;font-size:9.4px;color:#c9cdd5;letter-spacing:0.178px;">Remdove</span>
<span class="s" style="left:585.5px;top:283.90px;line-height:13px;font-size:9.4px;color:#c9cdd5;letter-spacing:0.534px;">Diece 6000 ac</span>
<span class="s" style="left:665.3px;top:283.90px;line-height:13px;font-size:9.4px;color:#c9cdd5;letter-spacing:0.326px;">Stico</span>
<span class="s" style="left:792.2px;top:283.90px;line-height:13px;font-size:9px;color:#c2c7d0;letter-spacing:0.130px;">Conbcnt</span>
<span class="s" style="left:834.4px;top:283.90px;line-height:13px;font-size:9px;color:#b9bec8;letter-spacing:0.608px;">1 0cel tass</span>
<span class="s" style="left:897.4px;top:283.90px;line-height:13px;font-size:9px;color:#b9bec8;letter-spacing:0.196px;">Mapo</span>
<svg style="left:936.0px;top:288.8px" width="7" height="4.4" viewBox="0 0 7 4.4"><path d="M.2 .3 H6.8 L3.5 4.1 Z" fill="#d3d7de"/></svg>
<div style="left:465.5px;top:307.6px;width:488.5px;height:24.4px;background:#2b303c;border-radius:3px;box-shadow:inset 0 0 0 1px #323743"></div>
<span class="s" style="left:473.8px;top:313.10px;line-height:15px;font-size:10.4px;color:#eef0f4;letter-spacing:0.705px;">lenips</span>
<span class="s" style="left:511.4px;top:314.60px;line-height:12px;font-size:8.8px;color:#5fae6b;letter-spacing:0.673px;">~ Halt</span>
<span class="s" style="left:905.5px;top:314.60px;line-height:12px;font-size:8.8px;color:#a9aeb9;letter-spacing:0.769px;">68t I5S</span>
<div style="left:465.5px;top:334.8px;width:487px;height:20px;background:#2c313d;border-radius:3px 3px 0 0"></div>
<div style="left:473.5px;top:334.8px;width:182px;height:20px;background:#30353f;border-radius:3px 3px 0 0"></div>
<span class="s" style="left:482.5px;top:337.70px;line-height:13px;font-size:9.2px;color:#f0f2f5;font-weight:700;letter-spacing:1.133px;">Tem</span>
<span class="s" style="left:519.0px;top:337.70px;line-height:13px;font-size:9px;color:#6f7684;letter-spacing:0.248px;">Remsove</span>
<span class="s" style="left:572.3px;top:337.70px;line-height:13px;font-size:9px;color:#6f7684;letter-spacing:0.423px;">Stalt</span>
<span class="s" style="left:616.0px;top:337.70px;line-height:13px;font-size:9px;color:#7f8693;letter-spacing:0.330px;">Redolre</span>
<svg style="left:925.0px;top:339.4px" width="9" height="9" viewBox="0 0 9 9"><path d="M1.4 7.6 V4.4 Q1.4 3.6 2.2 3.6 H6.8 Q7.6 3.6 7.6 4.4 V7.6 Z" fill="none" stroke="#aeb3bd" stroke-width="1"/><path d="M3 3.4 Q4.5 .8 6 3.4" fill="none" stroke="#aeb3bd" stroke-width="1"/></svg>
<svg style="left:941.0px;top:339.4px" width="9" height="9" viewBox="0 0 9 9"><circle cx="3.8" cy="3.8" r="2.6" fill="none" stroke="#aeb3bd" stroke-width="1"/><path d="M5.8 5.8 L8.2 8.2 M5.6 2 L2 5.6" stroke="#aeb3bd" stroke-width="1"/></svg>
<div style="left:477.4px;top:355.8px;width:474.8px;height:133.6px;background:#20242e;border-radius:0 0 3px 3px"></div>
<div style="left:465.5px;top:355.8px;width:27px;height:133.6px;background:#262b35;"></div>
<svg style="left:484.0px;top:367.6px" width="5" height="6" viewBox="0 0 5 6"><path d="M4.6 .4 L.6 3 L4.6 5.6 Z" fill="#4d5462"/></svg>
<svg style="left:484.0px;top:425.3px" width="5" height="6" viewBox="0 0 5 6"><path d="M4.6 .4 L.6 3 L4.6 5.6 Z" fill="#4d5462"/></svg>
<span class="m" style="left:497.7px;top:363.70px;line-height:15px;font-size:10.7px;letter-spacing:-0.021px;"><span style="position:static;color:#e6e9ee">{</span></span>
<span class="m" style="left:513.9px;top:381.50px;line-height:15px;font-size:10.7px;letter-spacing:0.033px;"><span style="position:static;color:#e6e9ee">"</span><span style="position:static;color:#8db3e2">or</span><span style="position:static;color:#e6e9ee">": </span><span style="position:static;color:#e6e9ee">4,</span></span>
<span class="m" style="left:513.9px;top:397.90px;line-height:15px;font-size:10.7px;letter-spacing:-0.119px;"><span style="position:static;color:#e6e9ee">"</span><span style="position:static;color:#8db3e2">fdiler</span><span style="position:static;color:#e6e9ee">": </span><span style="position:static;color:#e6e9ee">"Imylenent </span><span style="position:static;color:#e6c07a">user </span><span style="position:static;color:#e6e9ee">roles",</span></span>
<span class="m" style="left:513.9px;top:414.20px;line-height:15px;font-size:10.7px;letter-spacing:-0.157px;"><span style="position:static;color:#e6e9ee">"</span><span style="position:static;color:#8db3e2">Rencenkennir</span><span style="position:static;color:#e6e9ee">:</span><span style="position:static;color:#8fb79a">'</span><span style="position:static;color:#e6e9ee">"A00 </span><span style="position:static;color:#e6c07a">1oiic</span><span style="position:static;color:#e6e9ee">-based autnvricaation.",</span></span>
<span class="m" style="left:513.9px;top:431.50px;line-height:15px;font-size:10.7px;letter-spacing:-0.012px;"><span style="position:static;color:#e6e9ee">"</span><span style="position:static;color:#8db3e2">Ioonsit</span><span style="position:static;color:#e6e9ee">: </span><span style="position:static;color:#e6c07a">"0220-66.-65=705.00-068"</span><span style="position:static;color:#8db3e2">:|[S---3</span><span style="position:static;color:#e6e9ee">,</span></span>
<span class="m" style="left:513.9px;top:449.30px;line-height:15px;font-size:10.7px;letter-spacing:0.194px;"><span style="position:static;color:#e6e9ee">"</span><span style="position:static;color:#8db3e2">IaSSmplones</span><span style="position:static;color:#e6e9ee">": </span><span style="position:static;color:#e39a6a">Scioe</span></span>
<span class="m" style="left:497.7px;top:463.60px;line-height:15px;font-size:10.7px;letter-spacing:-0.021px;"><span style="position:static;color:#e6e9ee">}</span></span>
<div style="left:-0.5px;top:496.3px;width:964px;height:1px;background:#1b1f28;"></div>
<div style="left:460.2px;top:493.3px;width:503px;height:1px;background:#343944;"></div>
<div style="left:8.5px;top:498.3px;width:223px;height:20px;background:#2f3440;border-radius:3px"></div>
<div style="left:16.7px;top:503.4px;width:3.4px;height:3.4px;background:#d5d9df;"></div>
<div style="left:16.7px;top:508.4px;width:3.4px;height:4.6px;background:#d5d9df;"></div>
<div style="left:21.7px;top:506.0px;width:3.4px;height:7px;border:1px solid #d5d9df"></div>
<div style="left:32.9px;top:503.4px;width:8.6px;height:8.6px;background:#4f9e52;border-radius:50%;box-shadow:inset 0 0 0 1.6px #2f5d3a"></div>
<span class="s" style="left:57.8px;top:501.60px;line-height:14px;font-size:9.8px;color:#d6dae0;letter-spacing:-0.076px;">Seleris</span>
<svg style="left:102.1px;top:503.8px" width="7" height="9" viewBox="0 0 7 9"><path d="M.4 .4 H4.4 L6.6 2.6 V8.6 H.4 Z" fill="#e3e6eb"/></svg>
<span class="s" style="left:112.3px;top:502.10px;line-height:13px;font-size:9.4px;color:#c9cdd5;letter-spacing:0.288px;">Sogt</span>
<div style="left:144.5px;top:498.3px;width:86.8px;height:20px;background:#262b36;border:1px solid #383e4a;border-radius:2px"></div>
<span class="s" style="left:153.9px;top:501.80px;line-height:13px;font-size:9.6px;color:#eceef2;letter-spacing:0.191px;">Commetat Rasit</span>
<div style="left:-0.5px;top:519.3px;width:964px;height:29px;background:#20242e;"></div>
<div style="left:10.5px;top:529.4px;width:7.4px;height:8px;background:#7f8693;border-radius:1px"></div>
<div style="left:12.1px;top:531.2px;width:2px;height:2px;background:#20242e;"></div>
<div style="left:14.5px;top:533.8px;width:2px;height:2px;background:#20242e;"></div>
<div style="left:26.9px;top:530.4px;width:8.4px;height:6.2px;background:#b4b9c3;border-radius:2px 3px 3px 3px"></div>
<div style="left:26.9px;top:529.2px;width:4px;height:2.4px;background:#b4b9c3;border-radius:1px"></div>
<span class="s" style="left:43.7px;top:528.00px;line-height:12px;font-size:8.6px;color:#8f96a3;font-style:italic;letter-spacing:-0.179px;">GO</span>
<span class="s" style="left:71.9px;top:525.60px;line-height:16px;font-size:11.2px;color:#eef0f4;letter-spacing:0.054px;">REST API Project</span>
<svg style="left:166.1px;top:531.8px" width="6" height="4" viewBox="0 0 6 4"><path d="M.6 .6 L3 3 L5.4 .6" fill="none" stroke="#aeb3bd" stroke-width="1"/></svg>
<svg style="left:178.0px;top:528.4px" width="9" height="10.5" viewBox="0 0 9 10.5"><path d="M.6 .6 H5.6 L8.4 3.2 V9.9 H.6 Z" fill="#e9ecf1"/><rect x="1.8" y="4.6" width="3.4" height="3.6" fill="#3d7bd0"/><rect x="5.4" y="5.6" width="2" height="2.6" fill="#c9a34e"/></svg>
<span class="s" style="left:195.2px;top:527.30px;line-height:13px;font-size:9.6px;color:#c5c9d1;letter-spacing:0.103px;">Doiacer</span>
<span class="s" style="left:243.0px;top:527.30px;line-height:13px;font-size:9.6px;color:#c5c9d1;letter-spacing:0.408px;">Somiced</span>
<span class="s" style="left:288.9px;top:526.80px;line-height:14px;font-size:9.8px;color:#dfe2e8;letter-spacing:-0.077px;">REST API Project</span>
<svg style="left:370.5px;top:532.0px" width="6" height="4" viewBox="0 0 6 4"><path d="M.6 .6 L3 3 L5.4 .6" fill="none" stroke="#aeb3bd" stroke-width="1"/></svg>
<span class="s" style="left:601.8px;top:527.30px;line-height:13px;font-size:9.2px;color:#c2c7d0;letter-spacing:0.632px;">master s</span>
<div style="left:649.0px;top:524.4px;width:14.5px;height:17px;background:#2a303b;border-radius:2px"></div>
<svg style="left:651.7px;top:528.6px" width="9" height="9" viewBox="0 0 9 9"><circle cx="4.5" cy="4.5" r="3.6" fill="none" stroke="#aab0bb" stroke-width="1.1"/><path d="M3 4.6 H6 M4.6 3 V6" stroke="#aab0bb" stroke-width="1"/></svg>
<div style="left:663.5px;top:524.4px;width:77px;height:17px;background:#2f4b48;border-radius:2px"></div>
<svg style="left:667.3px;top:527.8px" width="10" height="10" viewBox="0 0 10 10"><path d="M5 .6 L9.6 9.4 H.4 Z" fill="#f2f4f6"/><path d="M5 4 V6.6" stroke="#2f4b48" stroke-width="1.2"/></svg>
<span class="s" style="left:682.5px;top:527.60px;line-height:12px;font-size:8.8px;color:#c9d3d2;letter-spacing:0.138px;">Contsrno Iulc</span>
<span class="s" style="left:750.5px;top:527.80px;line-height:12px;font-size:8.8px;color:#c2c7d0;letter-spacing:-0.266px;">Nenmmes</span>
<div style="left:795.5px;top:524.8px;width:45px;height:16.6px;background:#252a35;border-radius:2px"></div>
<svg style="left:797.3px;top:528.6px" width="9" height="9" viewBox="0 0 9 9"><circle cx="4.5" cy="4.5" r="3.7" fill="none" stroke="#aab0bb" stroke-width="1"/><path d="M4.5 2.4 V6.6 M3.2 3.4 H5.8" stroke="#aab0bb" stroke-width=".9"/></svg>
<div style="left:810.9px;top:530.4px;width:6.4px;height:5.4px;border:1.4px solid #cfd3da;border-radius:2px"></div>
<div style="left:823.3px;top:529.6px;width:4.6px;height:7px;border:1.3px solid #cfd3da;border-radius:2px"></div>
<div style="left:848.1px;top:524.8px;width:61px;height:16.6px;background:#272c37;border-radius:2px"></div>
<svg style="left:853.5px;top:529.0px" width="8" height="8" viewBox="0 0 8 8"><path d="M.8 1 L4 7.4 L7.2 1 L4 3 Z" fill="#c9a36a"/></svg>
<div style="left:864.9px;top:529.4px;width:4.6px;height:7.4px;background:#d9b070;border-radius:1px"></div>
<svg style="left:876.9px;top:529.0px" width="9" height="8" viewBox="0 0 9 8"><path d="M.4 3 H2.6 L6.4 .4 V7.6 L2.6 5 H.4 Z" fill="#b4b9c3"/></svg>
<svg style="left:888.1px;top:530.6px" width="6" height="5" viewBox="0 0 6 5"><path d="M.6 .8 L3 4 L5.4 .8" fill="none" stroke="#c5c9d1" stroke-width="1.1"/></svg>
<div style="left:914.1px;top:524.8px;width:43.4px;height:16.6px;background:#272c37;border-radius:2px"></div>
<svg style="left:919.3px;top:528.4px" width="7" height="9" viewBox="0 0 7 9"><rect x=".6" y="4" width="5.8" height="4.6" rx=".6" fill="#eef0f4"/><path d="M1.8 4 V2.6 Q3.5 .2 5.2 2.6 V4" fill="none" stroke="#eef0f4" stroke-width="1.1"/></svg>
<div style="left:929.9px;top:531.4px;width:5.4px;height:1.1px;background:#9aa0ac;"></div>
<div style="left:929.9px;top:534.2px;width:5.4px;height:1.1px;background:#9aa0ac;"></div>
<div style="left:938.9px;top:529.4px;width:5.8px;height:7.4px;border:1.4px solid #e3e6eb;border-radius:2.6px"></div>
</div>
</body></html>
